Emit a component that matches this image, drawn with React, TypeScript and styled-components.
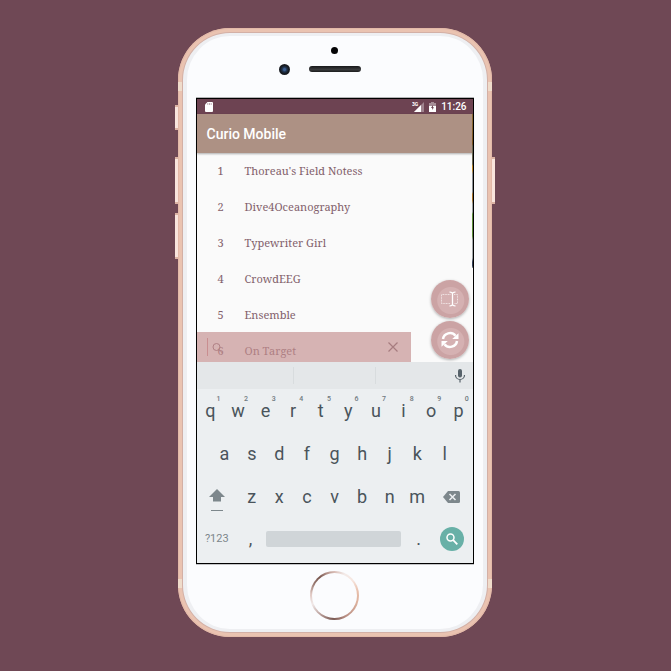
import React from "react";
import styled, { createGlobalStyle } from "styled-components";

const GlobalStyle = createGlobalStyle`
  * { box-sizing: border-box; }
  body { margin: 0; background: #6f4855; font-family: Roboto, sans-serif; }
  button, input { font: inherit; color: inherit; margin: 0; padding: 0; border: 0; background: none; }
  button { cursor: pointer; }
`;

const Page = styled.main`
  display: flex;
  justify-content: center;
  align-items: flex-start;
  min-height: 100vh;
  padding: 28px 22px 34px 20px;
  background: #6f4855;
`;

const Phone = styled.div`
  position: relative;
  width: 100%;
  max-width: 314px;
  padding: 5px;
  border-radius: 52px;
  background: #eac3b1;
  box-shadow: inset 0 0 0 1px #e3b9a8;
`;

const SideButton = styled.span<{ $side: "left" | "right"; $top: number; $height: number }>`
  position: absolute;
  ${(p) => p.$side}: -3px;
  top: ${(p) => p.$top}px;
  width: 3px;
  height: ${(p) => p.$height}px;
  border: solid #dcb3a4;
  border-width: 2px 0;
  background: #f9e5dd;
`;

const AntennaBand = styled.span<{ $edge: "top" | "bottom" }>`
  position: absolute;
  ${(p) => p.$edge}: ${(p) => (p.$edge === "top" ? 54 : 49)}px;
  left: 0;
  right: 0;
  height: 9px;
  background: #efdccb;
`;

const Face = styled.div`
  position: relative;
  border: solid #eeeff2;
  border-width: 3px 4px;
  border-radius: 47px;
  background: #fbfcfe;
  box-shadow: 0 0 0 1px #d3b0a6;
  padding: 0 9px;
`;

const TopBezel = styled.div`
  display: grid;
  grid-template-columns: 1fr 52px 1fr;
  grid-template-rows: 10px 12px;
  row-gap: 8px;
  align-items: center;
  height: 62px;
  padding-top: 9px;
`;

const Sensor = styled.span`
  grid-column: 2;
  justify-self: center;
  width: 7px;
  height: 7px;
  border-radius: 50%;
  background: #040405;
`;

const Camera = styled.span`
  grid-column: 1;
  justify-self: end;
  width: 11px;
  height: 11px;
  margin-right: 19px;
  border-radius: 50%;
  background: radial-gradient(circle, #3d5f92 0 12%, #20344f 30%, #15181d 55%, #2c3036);
`;

const Speaker = styled.span`
  height: 6px;
  border-radius: 3px;
  background: linear-gradient(#17181a, #3a3b3d 60%, #1a1b1c);
`;

const Screen = styled.section`
  position: relative;
  border: 1px solid #000;
  background: #fafafa;
  box-shadow: 0 1px 0 #c4c5c7, 0 -1px 0 #b4b4b6;

  &::after {
    content: "";
    position: absolute;
    top: 15px;
    right: 0;
    width: 1px;
    height: 154px;
    background: linear-gradient(
      #8a6a35 0 8px, #7a5320 30px, #6b6a55 32px 50px, #c08a2c 52px 56px,
      #8b9096 60px 78px, #a8742c 80px 86px, #9aa0a2 90px 98px, #5f8f3c 100px 122px,
      #a0a5a8 126px 144px, #35415a 148px 152px, #a0a5a8
    );
  }
`;

const StatusBar = styled.div`
  display: flex;
  align-items: center;
  height: 15px;
  padding: 0 6px 0 8px;
  background: #6d4352;
  color: #fff;
  font-size: 10px;
  font-weight: 500;
  line-height: 15px;
`;

const StatusIcons = styled.div`
  display: flex;
  align-items: center;
  gap: 5px;
  margin-left: auto;
`;

const AppBar = styled.header`
  display: flex;
  align-items: center;
  height: 39px;
  padding: 0 10px;
  background: #ad9184;
  box-shadow: 0 1px 2px #00000050;
`;

const Title = styled.h1`
  margin: 0;
  color: #fff;
  font-size: 14px;
  font-weight: 500;
  line-height: 20px;
`;

const Content = styled.div`
  position: relative;
  height: 209px;
  overflow: hidden;
`;

const ProjectList = styled.ul`
  margin: 0;
  padding: 0;
  list-style: none;
`;

const Project = styled.li`
  display: flex;
  align-items: center;
  height: 36px;
  padding-bottom: 2px;
  color: #82606b;
  font-family: "Noto Serif", "DejaVu Serif Condensed", "DejaVu Serif", serif;
  font-size: 11px;
`;

const Index = styled.span`
  width: 48px;
  padding-left: 21px;
`;

const SearchBox = styled.form`
  position: absolute;
  left: 0;
  right: 62px;
  bottom: 0;
  display: flex;
  align-items: center;
  height: 30px;
  padding: 0 12px 0 10px;
  background: #c48f8fa8;
`;

const SearchInput = styled.input`
  flex: 1;
  min-width: 0;
  height: 18px;
  border-left: 1px solid #c98e90;
  outline: none;
`;

const SearchGlyph = styled.svg`
  position: absolute;
  left: 15px;
  top: 10px;
`;

const PlainButton = styled.button`
  display: flex;
  align-items: center;
  justify-content: center;
`;

const Actions = styled.div`
  position: absolute;
  right: 4px;
  bottom: 3px;
  display: grid;
  gap: 3px;
`;

const RoundButton = styled(PlainButton)`
  width: 38px;
  height: 38px;
  border-radius: 50%;
  background: radial-gradient(circle at 52% 54%, #d5b1b2 0 13px, #cba3a4 14px);
  box-shadow: 0 1px 3px #00000050;
`;

const Keyboard = styled.div`
  background: #eceff1;
  color: #4a545b;
`;

const Suggestions = styled.div`
  display: grid;
  grid-template-columns: 97px 82px 1fr;
  align-items: center;
  height: 27px;
  background: #e4e7e9;
`;

const Slot = styled.span`
  height: 17px;
  border-right: 1px solid #d8dcde;
`;

const MicButton = styled(PlainButton)`
  justify-self: end;
  margin-right: 7px;
`;

const KeyRow = styled.div<{ $inset?: number }>`
  display: flex;
  height: 43px;
  padding: 0 ${(p) => p.$inset ?? 0}px;
`;

const Key = styled.button<{ $grow?: number }>`
  position: relative;
  flex: ${(p) => p.$grow ?? 2} 1 0;
  min-width: 0;
  display: flex;
  align-items: center;
  justify-content: center;
  font-size: 18px;
  line-height: 20px;
`;

const Hint = styled.span`
  position: absolute;
  top: 6px;
  left: 20px;
  color: #6f797f;
  font-size: 7px;
  font-weight: 500;
  line-height: 8px;
`;

const BottomRow = styled(KeyRow)`
  height: 45px;
  padding-bottom: 3px;
`;

const ModeKey = styled(Key)`
  color: #7c868b;
  font-size: 11px;
`;

const SpaceKey = styled(Key)`
  padding: 0 4px 0 2px;

  &::before {
    content: "";
    width: 100%;
    height: 16px;
    border-radius: 2px;
    background: #d0d5d8;
  }
`;

const GoDisc = styled.span`
  display: flex;
  align-items: center;
  justify-content: center;
  flex: none;
  width: 24px;
  height: 24px;
  border-radius: 50%;
  background: #68b0a7;
`;

const BottomBezel = styled.div`
  display: flex;
  justify-content: center;
  height: 65px;
  padding-top: 7px;
`;

const HomeButton = styled.button`
  width: 49px;
  height: 49px;
  border: 2px solid transparent;
  border-radius: 50%;
  background:
    linear-gradient(#fbfcfe, #fbfcfe) padding-box,
    conic-gradient(#d9bdb6, #f3ebe9 7%, #f7e6df 14%, #e8bfab 22%, #dcb09c 30%, #b98f84 42%, #7a5a54 51%, #b79c97 60%, #f0e8e8 69%, #e0c8c2 76%, #9a7a72 83%, #76544c 89%, #b5938b 95%, #d9bdb6) border-box;
`;

const projects = ["Thoreau's Field Notess", "Dive4Oceanography", "Typewriter Girl", "CrowdEEG", "Ensemble", "On Target"];

const ShiftIcon = () => (
  <svg width="16" height="30" viewBox="0 0 16 30" fill="#7d878c">
    <path d="M7 7L15 15H11V19.500H3V15H-1Z" transform="translate(1)" />
    <rect x="2" y="28" width="12" height="1" />
  </svg>
);

const DeleteIcon = () => (
  <svg width="17" height="12" viewBox="0 0 17 12">
    <path d="M5 0H15.500Q17 0 17 1.500V10.500Q17 12 15.500 12H5L0 6Z" fill="#7d878c" />
    <path d="M6.500 3L12.500 9M12.500 3L6.500 9" stroke="#eceff1" strokeWidth="1.500" />
  </svg>
);

const RenameIcon = () => (
  <svg width="20" height="16" viewBox="0 0 20 16" fill="none" stroke="#fff">
    <path d="M10.500 3.500H1.500V12.500H10.500M14 3.500H17.500V12.500H14" strokeDasharray="1 .6" strokeOpacity=".65" />
    <path d="M9.500 1.200Q12 1 12.500 2.500Q13 1 15.500 1.200M12.500 2V14M9.500 14.800Q12 15 12.500 13.500Q13 15 15.500 14.800" strokeWidth="1.300" />
  </svg>
);

const SyncIcon = () => (
  <svg width="18" height="18" viewBox="0 0 18 18" fill="none" stroke="#fff" strokeWidth="2.500">
    <path d="M2 8A7 6.800 0 0 1 14.500 4.800M16 10A7 6.800 0 0 1 3.500 13.200" />
    <path d="M17.500 2.200V8H11.200ZM.5 15.800V10H6.800Z" fill="#fff" stroke="none" />
  </svg>
);

export default function App() {
  return (
    <>
      <GlobalStyle />
      <Page>
        <Phone>
          <SideButton $side="left" $top={77} $height={25} />
          <SideButton $side="left" $top={129} $height={47} />
          <SideButton $side="left" $top={185} $height={46} />
          <SideButton $side="right" $top={129} $height={47} />
          <AntennaBand $edge="top" />
          <AntennaBand $edge="bottom" />
          <Face>
            <TopBezel>
              <Sensor />
              <Camera />
              <Speaker />
            </TopBezel>
            <Screen>
              <StatusBar>
                <svg width="8" height="10" viewBox="0 0 8 10">
                  <path d="M2.500 0H7Q8 0 8 1V9Q8 10 7 10H1Q0 10 0 9V2.500Z" fill="#fff" />
                  <path d="M2.800 1V3M4.500 1V3M6.200 1V3" stroke="#a98c96" strokeWidth=".7" />
                </svg>
                <StatusIcons>
                  <svg width="12" height="10" viewBox="0 0 12 10">
                    <path d="M12 0V10H2Z" fill="#fff" fillOpacity=".35" />
                    <path d="M9 3V10H2Z" fill="#fff" />
                    <text x="0" y="4" fontSize="5" fontWeight="700" fill="#fff">3G</text>
                  </svg>
                  <svg width="7" height="10" viewBox="0 0 7 10">
                    <path d="M2 0H5V1H7V10H0V1H2Z" fill="#fff" fillOpacity=".4" />
                    <path d="M0 4H7V10H0Z" fill="#fff" />
                    <path d="M4 3L2 6H3.200V8L5 5.200H4Z" fill="#6d4352" />
                  </svg>
                  <time>11:26</time>
                </StatusIcons>
              </StatusBar>
              <AppBar>
                <Title>Curio Mobile</Title>
              </AppBar>
              <Content>
                <ProjectList>
                  {projects.map((name, i) => (
                    <Project key={name}>
                      <Index>{i + 1}</Index>
                      {name}
                    </Project>
                  ))}
                </ProjectList>
                <SearchBox>
                  <SearchGlyph width="14" height="14" viewBox="0 0 14 14" fill="none" stroke="#b08084">
                    <circle cx="4.500" cy="5" r="3.500" />
                    <path d="M7 7.500L10.500 11" />
                  </SearchGlyph>
                  <SearchInput aria-label="Search projects" />
                  <PlainButton type="button" aria-label="Clear search">
                    <svg width="12" height="12" viewBox="0 0 12 12" stroke="#a67c7f" strokeWidth="1.200">
                      <path d="M1.500 1.500L10.500 10.500M10.500 1.500L1.500 10.500" />
                    </svg>
                  </PlainButton>
                </SearchBox>
                <Actions>
                  <RoundButton aria-label="Rename"><RenameIcon /></RoundButton>
                  <RoundButton aria-label="Refresh"><SyncIcon /></RoundButton>
                </Actions>
              </Content>
              <Keyboard>
                <Suggestions>
                  <Slot />
                  <Slot />
                  <MicButton aria-label="Voice input">
                    <svg width="12" height="14" viewBox="0 0 12 14">
                      <rect x="4" y="0" width="4" height="8.500" rx="2" fill="#57626a" />
                      <path d="M1.500 6A4.500 4.500 0 0 0 10.500 6M6 10.500V13.500" fill="none" stroke="#57626a" strokeWidth="1.200" />
                    </svg>
                  </MicButton>
                </Suggestions>
                <KeyRow>
                  {"qwertyuiop".split("").map((letter, i) => (
                    <Key key={letter}>
                      {letter}
                      <Hint>{(i + 1) % 10}</Hint>
                    </Key>
                  ))}
                </KeyRow>
                <KeyRow $inset={14}>
                  {"asdfghjkl".split("").map((letter) => (
                    <Key key={letter}>{letter}</Key>
                  ))}
                </KeyRow>
                <KeyRow>
                  <Key $grow={3} aria-label="Shift"><ShiftIcon /></Key>
                  {"zxcvbnm".split("").map((letter) => (
                    <Key key={letter}>{letter}</Key>
                  ))}
                  <Key $grow={3} aria-label="Delete"><DeleteIcon /></Key>
                </KeyRow>
                <BottomRow>
                  <ModeKey $grow={3}>?123</ModeKey>
                  <Key>,</Key>
                  <SpaceKey $grow={10} aria-label="Space" />
                  <Key>.</Key>
                  <Key $grow={3} aria-label="Search">
                    <GoDisc>
                      <svg width="12" height="12" viewBox="0 0 12 12" fill="none" stroke="#fff">
                        <circle cx="4.500" cy="4.500" r="3.500" strokeWidth="1.500" />
                        <path d="M7.200 7.200L11.300 11.300" strokeWidth="1.800" />
                      </svg>
                    </GoDisc>
                  </Key>
                </BottomRow>
              </Keyboard>
            </Screen>
            <BottomBezel>
              <HomeButton aria-label="Home" />
            </BottomBezel>
          </Face>
        </Phone>
      </Page>
    </>
  );
}
